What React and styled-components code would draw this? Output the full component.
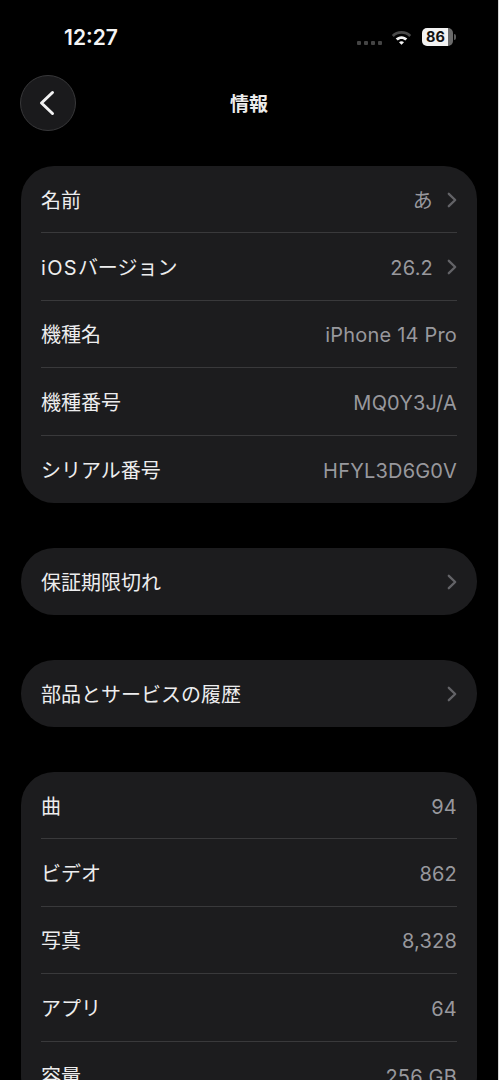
import React from "react";
import styled, { createGlobalStyle } from "styled-components";

const Global = createGlobalStyle`
  html, body { margin: 0; padding: 0; background: #000; }
  body { height: 1080px; overflow: hidden; font-family: Inter, "Noto Sans CJK JP", sans-serif; }
`;

const Page = styled.div`
  width: 499px;
  height: 1080px;
  box-sizing: border-box;
  border-right: 1px solid #d8d8d8;
  overflow: hidden;
  background: #000;
  color: #f2f2f3;
`;

const StatusBar = styled.div`
  height: 75px;
  display: flex;
  justify-content: space-between;
  align-items: flex-start;
  padding: 25px 45px 0 64px;
  box-sizing: border-box;
`;

const Time = styled.div`
  font: 600 21px/25px Inter, sans-serif;
  color: #f4f4f4;
`;

const StatusIcons = styled.div`
  display: flex;
  align-items: center;
  height: 25px;
`;

const Dots = styled.div`
  display: flex;
  gap: 3px;
  margin-right: 9px;
  margin-top: 11px;
`;

const Dot = styled.span`
  width: 4px;
  height: 4px;
  border-radius: 1px;
  background: #444;
`;

const Battery = styled.div`
  position: relative;
  width: 31px;
  height: 18px;
  box-sizing: border-box;
  padding-right: 4px;
  margin-left: 10px;
  margin-top: -1px;
  border-radius: 5px;
  background: linear-gradient(90deg, #f2f2f2 84%, #6a6a6a 84%);
  color: #111;
  font: 700 14.5px/18px Inter, sans-serif;
  text-align: center;
  &::after {
    content: "";
    position: absolute;
    right: -3px;
    top: 6px;
    width: 2px;
    height: 6px;
    border-radius: 0 2px 2px 0;
    background: #5a5a5a;
  }
`;

const NavBar = styled.div`
  height: 56px;
  display: flex;
  align-items: center;
  padding-left: 20px;
  position: relative;
`;

const BackButton = styled.div`
  width: 56px;
  height: 56px;
  box-sizing: border-box;
  border-radius: 50%;
  background: #1a1a1c;
  border: 1px solid #38383a;
  display: flex;
  align-items: center;
  justify-content: center;
  & > svg { margin-right: 3px; }
`;

const Title = styled.div`
  position: absolute;
  left: 0;
  right: 0;
  text-align: center;
  font: 600 19px/28px "Noto Sans CJK JP", sans-serif;
  color: #ececec;
`;

const Content = styled.div`
  display: flex;
  flex-direction: column;
  gap: 45px;
  padding: 35px 21px 0 21px;
`;

const Card = styled.div`
  background: #1c1c1e;
  border-radius: 33px;
  padding: 0 20px;
`;

const Row = styled.div`
  height: ${(p) => (p.$single ? "67px" : "67.4px")};
  box-sizing: border-box;
  padding-top: 3px;
  display: flex;
  align-items: center;
  justify-content: space-between;
  &:not(:last-child) { border-bottom: 1.5px solid #39393b; }
`;

const Label = styled.span`
  font: 400 20px/28px Inter, "Noto Sans CJK JP", sans-serif;
  color: #ededee;
`;

const Latin = styled.span`
  letter-spacing: 1.3px;
`;

const ValueWrap = styled.span`
  display: flex;
  align-items: center;
  gap: 12px;
`;

const Value = styled.span`
  font: 400 20px/28px Inter, "Noto Sans CJK JP", sans-serif;
  letter-spacing: 0.2px;
  color: #98989d;
`;

const ChevronSvg = styled.svg`
  margin-top: -2px;
`;

const Chevron = () => (
  <ChevronSvg width="12" height="18" viewBox="0 0 12 18" fill="none">
    <path d="M3.8 2.8 L10.2 9 L3.8 15.2" stroke="#636367" strokeWidth="2.3" strokeLinecap="round" strokeLinejoin="round" />
  </ChevronSvg>
);

const Item = ({ label, value, arrow, single }) => (
  <Row $single={single}>
    <Label>{label}</Label>
    <ValueWrap>
      {value && <Value>{value}</Value>}
      {arrow && <Chevron />}
    </ValueWrap>
  </Row>
);

export default function App() {
  return (
    <Page>
      <Global />
      <StatusBar>
        <Time>12:27</Time>
        <StatusIcons>
          <Dots><Dot /><Dot /><Dot /><Dot /></Dots>
          <svg width="21" height="16" viewBox="0 0 21 16">
            <path d="M10.5 1C6.6 1 3.2 2.5.8 5l2 2c1.9-2 4.6-3.2 7.7-3.2s5.8 1.2 7.7 3.2l2-2C17.8 2.5 14.4 1 10.5 1z" fill="#4a4a4a" />
            <path d="M10.5 6.2c-2.3 0-4.3.9-5.8 2.4l2 2c1-1 2.3-1.6 3.8-1.6s2.8.6 3.8 1.6l2-2c-1.5-1.5-3.5-2.4-5.8-2.4z" fill="#f4f4f4" />
            <path d="M10.5 11.2c-1 0-1.9.4-2.5 1l2.5 2.6 2.5-2.6c-.6-.6-1.5-1-2.5-1z" fill="#f4f4f4" />
          </svg>
          <Battery>86</Battery>
        </StatusIcons>
      </StatusBar>
      <NavBar>
        <BackButton>
          <svg width="18" height="26" viewBox="0 0 18 26" fill="none">
            <path d="M14.5 2.5 L3.5 13 L14.5 23.5" stroke="#f2f2f2" strokeWidth="3" strokeLinecap="round" strokeLinejoin="round" />
          </svg>
        </BackButton>
        <Title>情報</Title>
      </NavBar>
      <Content>
        <Card>
          <Item label="名前" value="あ" arrow />
          <Item label={<><Latin>iOS</Latin>バージョン</>} value="26.2" arrow />
          <Item label="機種名" value="iPhone 14 Pro" />
          <Item label="機種番号" value="MQ0Y3J/A" />
          <Item label="シリアル番号" value="HFYL3D6G0V" />
        </Card>
        <Card><Item label="保証期限切れ" arrow single /></Card>
        <Card><Item label="部品とサービスの履歴" arrow single /></Card>
        <Card>
          <Item label="曲" value="94" />
          <Item label="ビデオ" value="862" />
          <Item label="写真" value="8,328" />
          <Item label="アプリ" value="64" />
          <Item label="容量" value="256 GB" />
        </Card>
      </Content>
    </Page>
  );
}
